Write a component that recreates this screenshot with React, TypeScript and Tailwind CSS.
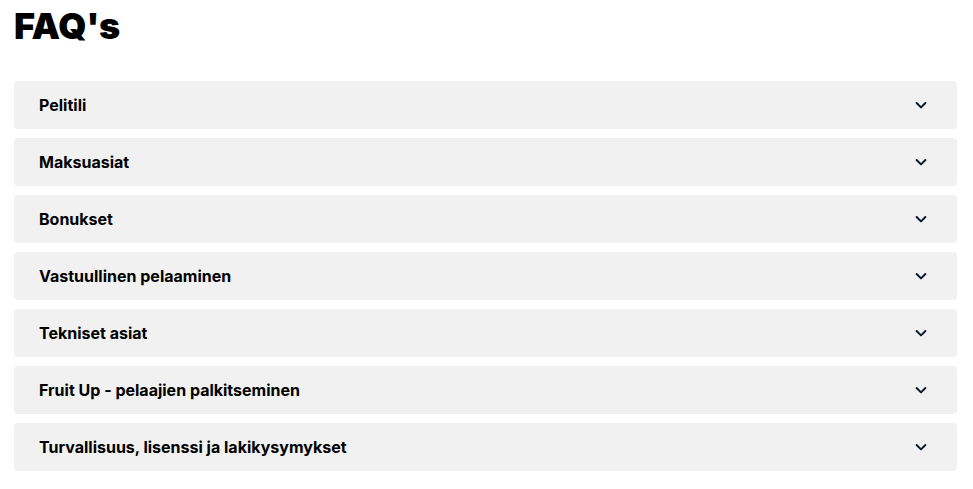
import React from 'react';

const items = [
  'Pelitili',
  'Maksuasiat',
  'Bonukset',
  'Vastuullinen pelaaminen',
  'Tekniset asiat',
  'Fruit Up - pelaajien palkitseminen',
  'Turvallisuus, lisenssi ja lakikysymykset',
];

const Chevron = () => (
  <svg width="14" height="14" viewBox="0 0 24 24" fill="none" stroke="#0a1a2a" strokeWidth="3.4" strokeLinecap="round" strokeLinejoin="round">
    <path d="M4.5 8.5l7.5 7.5 7.5-7.5" />
  </svg>
);

export default function App() {
  return (
    <div className="min-h-screen bg-white pl-[14px] pr-[16px] text-black" style={{ fontFamily: 'Inter, "Noto Sans", sans-serif' }}>
      <h1 className="pt-[4px] text-[36px] leading-[45px] font-black tracking-[-0.2px]">FAQ's</h1>
      <div className="mt-[32px] flex flex-col gap-[9px]">
        {items.map((item) => (
          <div key={item} className="flex h-[48px] items-center justify-between rounded-[4px] bg-[#f1f1f1] pl-[25px] pr-[29px]">
            <span className="text-[16px] font-bold">{item}</span>
            <Chevron />
          </div>
        ))}
      </div>
    </div>
  );
}
